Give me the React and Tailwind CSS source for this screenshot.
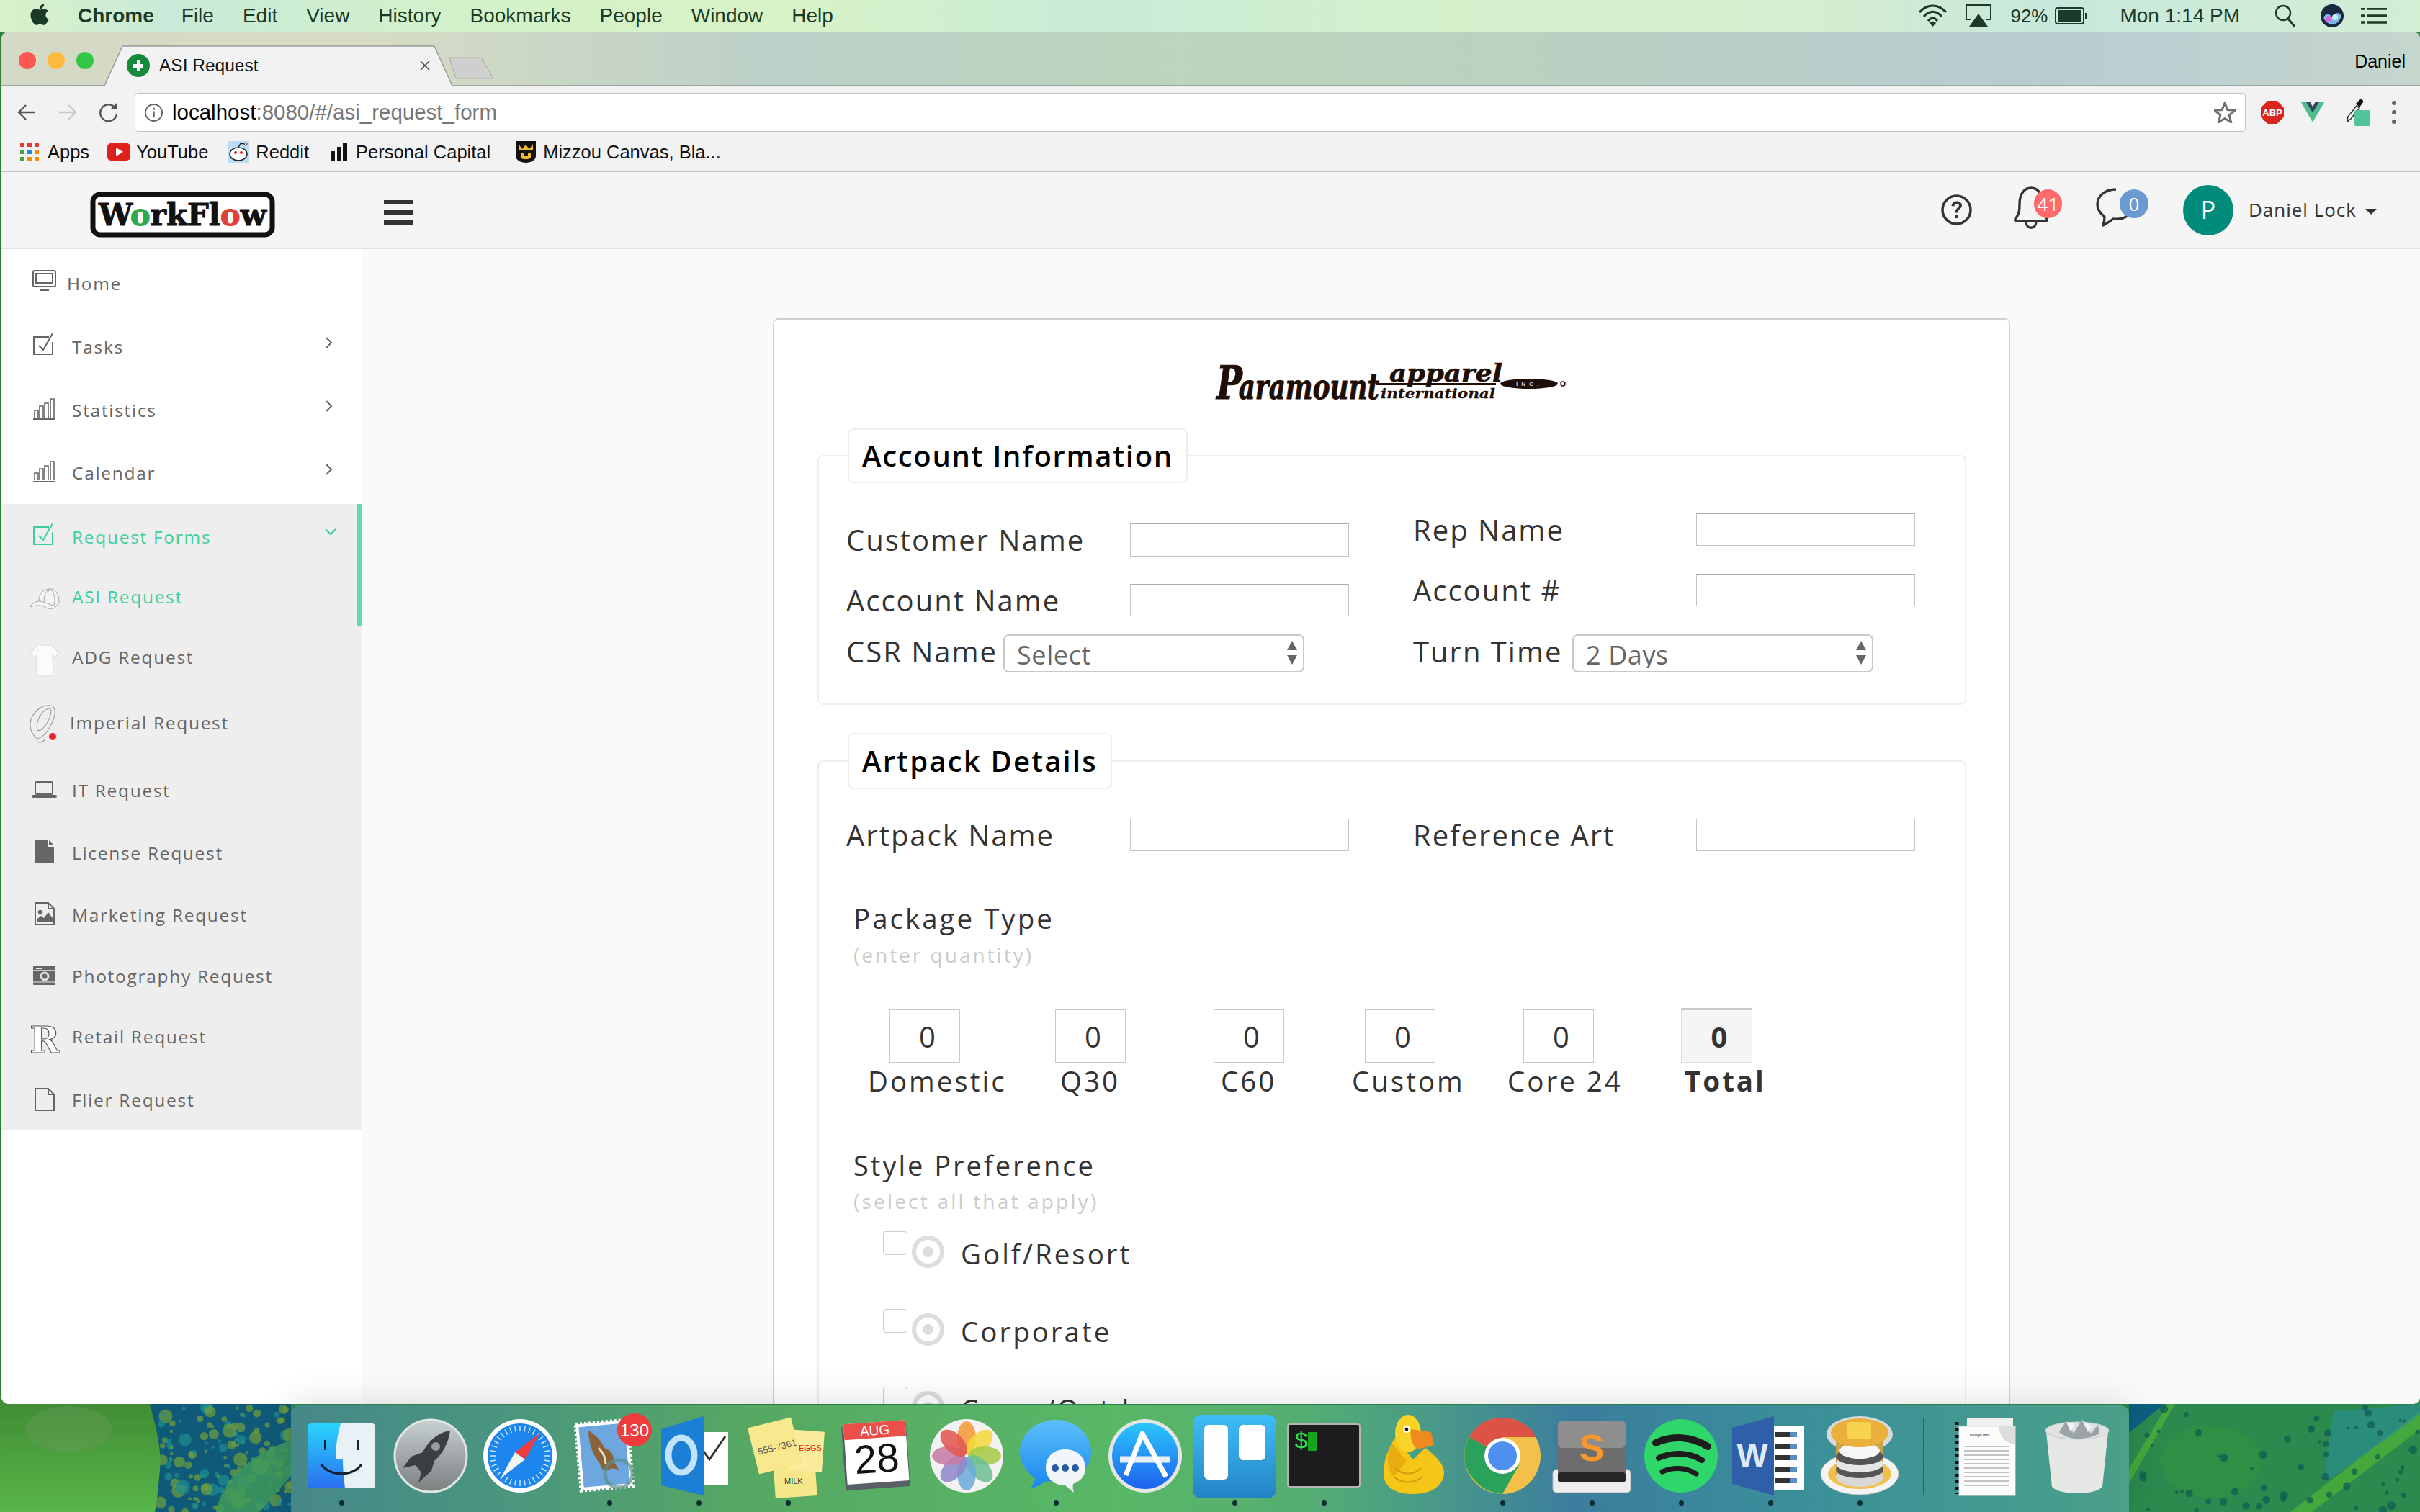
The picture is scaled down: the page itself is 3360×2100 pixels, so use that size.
import { FaApple } from "react-icons/fa";

const sidebarItems = [
  { label: "Home", icon: "home", row: "h-[88px]", text: "ml-[5px]" },
  { label: "Tasks", icon: "tasks", row: "h-[88px]", text: "ml-[12px]", chevron: true },
  { label: "Statistics", icon: "bars", row: "h-[88px]", text: "ml-[12px]", chevron: true },
  { label: "Calendar", icon: "bars", row: "h-[86px]", text: "ml-[12px]", chevron: true },
];

const requestItems = [
  { label: "ADG Request", icon: "shirt", row: "h-[86px]", text: "ml-[12px]" },
  { label: "Imperial Request", icon: "imperial", row: "h-[96px]", text: "ml-[9px]" },
  { label: "IT Request", icon: "laptop", row: "h-[92px]", text: "ml-[12px]" },
  { label: "License Request", icon: "fileSolid", row: "h-[82px]", text: "ml-[12px]" },
  { label: "Marketing Request", icon: "fileImage", row: "h-[90px]", text: "ml-[12px]" },
  { label: "Photography Request", icon: "camera", row: "h-[80px]", text: "ml-[12px]" },
  { label: "Retail Request", icon: "retail", row: "h-[88px]", text: "ml-[12px]" },
  { label: "Flier Request", icon: "file", row: "h-[85px] pt-[3px]", text: "ml-[12px]" },
];

const packageCols = [
  { label: "Domestic", input: "ml-[30px]", text: "ml-0" },
  { label: "Q30", input: "ml-[40px]", text: "ml-[47px]" },
  { label: "C60", input: "ml-[40px]", text: "ml-[50px]" },
  { label: "Custom", input: "ml-[30px]", text: "ml-[12px]" },
  { label: "Core 24", input: "ml-[30px]", text: "ml-[8px]" },
];

const styleOptions = ["Golf/Resort", "Corporate", "Camo/Outdoor"];

function SideIcon({ name, color = "#666" }) {
  const line = { fill: "none", stroke: color, strokeWidth: 2 };
  return (
    <svg viewBox="0 0 48 48" className="w-[48px] h-[48px] shrink-0 overflow-visible">
      {name === "home" && (
        <g {...line}>
          <rect x="6" y="6" width="31" height="22" rx="2" />
          <rect x="10" y="10" width="23" height="13" />
          <path d="M15 33H28" />
        </g>
      )}
      {name === "tasks" && (
        <g {...line}>
          <path d="M28 10H7V34H33V17" />
          <path d="M14 22L20 28L33 5" />
        </g>
      )}
      {name === "bars" && (
        <g {...line} strokeWidth="1.6">
          <path d="M6 36H37" strokeWidth="2" />
          <path d="M8 34V24H13V34M15 34V18H20V34M22 34V14H27V34M30 34V8H35V34" />
        </g>
      )}
      {name === "cap" && (
        <g fill="#f4f4f4" stroke="#aaa" strokeWidth="1">
          <path d="M14 30C14 16 24 13 30 13C38 13 42 20 42 32C40 36 36 38 33 37L14 30Z" />
          <path d="M14 30C8 31 3 34 2 38C10 35 18 35 24 39C30 42 36 40 38 37C30 36 22 30 14 30Z" />
          <path d="M28 13C22 18 20 26 22 32M30 13C36 18 37 28 35 36" fill="none" />
          <circle cx="27" cy="15" r="1" fill="#777" />
        </g>
      )}
      {name === "shirt" && (
        <g fill="#fbfbfb" stroke="#dddddd" strokeWidth="1.2">
          <path d="M13 6C18 8 26 8 31 6L42 18L37 24L33 21L34 48C26 51 18 51 10 48L11 21L7 24L2 18Z" />
        </g>
      )}
      {name === "imperial" && (
        <g fill="none" stroke="#999" strokeWidth="1.1">
          <path d="M30 0C18 -2 4 10 2 24C1 34 6 42 12 46C24 44 38 18 36 6C35 2 33 0 30 0Z" />
          <path d="M27 4C17 8 9 22 12 34C18 38 30 20 31 8C31 5 29 4 27 4Z" />
          <path d="M12 46C9 52 16 53 23 47" />
          <circle cx="33" cy="43" r="5" fill="#ee2030" stroke="none" />
        </g>
      )}
      {name === "laptop" && (
        <g>
          <rect x="9" y="12" width="24" height="17" rx="2" {...line} />
          <rect x="4" y="30" width="35" height="4" rx="2" fill={color} />
        </g>
      )}
      {name === "fileSolid" && (
        <g fill={color}>
          <path d="M9 5H26V15H35V37C35 38 34 38 33 38H10C9 38 8 38 8 37V6C8 5 8 5 9 5Z" />
          <path d="M28 6L35 13H28Z" />
        </g>
      )}
      {name === "fileImage" && (
        <g>
          <path d="M9 7H27L35 15V37H9Z" {...line} />
          <path d="M27 7V15H35" {...line} />
          <circle cx="16" cy="20" r="3.2" fill={color} />
          <path d="M12 34V29L17 25L21 28L27 20L33 28V34Z" fill={color} />
        </g>
      )}
      {name === "camera" && (
        <g>
          <path d="M8 9H36C37 9 37 10 37 11V35C37 36 36 36 35 36H8C7 36 6 36 6 35V11C6 10 7 9 8 9Z" fill={color} />
          <rect x="10" y="12" width="8" height="2" fill="#eee" />
          <path d="M6 16H37" stroke="#eee" strokeWidth="1.5" />
          <path d="M6 32H37" stroke="#eee" strokeWidth="1" />
          <circle cx="22" cy="24" r="6" fill="#ddd" stroke="#eee" />
          <circle cx="22" cy="24" r="3.5" fill={color} />
        </g>
      )}
      {name === "retail" && (
        <text x="22" y="46" textAnchor="middle" fontFamily="'DejaVu Serif', serif" fontWeight="700" fontSize="50" fill="#fff" stroke="#555" strokeWidth="1.2">
          R
        </text>
      )}
      {name === "file" && (
        <g {...line}>
          <path d="M9 8H27L35 16V38H9Z" />
          <path d="M27 8V16H35" />
        </g>
      )}
    </svg>
  );
}

function Chevron({ open }) {
  return open ? (
    <svg viewBox="0 0 16 10" className="absolute left-[449px] top-[34px] w-[16px] h-[10px]">
      <path d="M1 1L8 8L15 1" fill="none" stroke="#3ecf9c" strokeWidth="2" />
    </svg>
  ) : (
    <svg viewBox="0 0 10 16" className="absolute left-[450px] top-[30px] w-[10px] h-[16px]">
      <path d="M1 1L8 8L1 15" fill="none" stroke="#666" strokeWidth="2" />
    </svg>
  );
}

function SideRow({ item }) {
  return (
    <div className={`relative flex items-center pl-[38px] ${item.row}`}>
      <SideIcon name={item.icon} />
      <span className={`text-[24.5px] tracking-[1.7px] text-[#666] ${item.text}`}>{item.label}</span>
      {item.chevron && <Chevron />}
    </div>
  );
}

function Sidebar() {
  return (
    <aside className="w-[500px] shrink-0 bg-white pt-[4px] h-full">
      {sidebarItems.map((item) => (
        <SideRow key={item.label} item={item} />
      ))}
      <div className="bg-[#eeeeee]">
        <div className="border-r-[6px] border-[#63d9b0]">
          <div className="relative flex items-center pl-[38px] h-[90px] pt-[2px]">
            <SideIcon name="tasks" color="#3ecf9c" />
            <span className="ml-[12px] text-[24.5px] tracking-[1.7px] text-[#3ecf9c]">Request Forms</span>
            <Chevron open />
          </div>
          <div className="flex items-center pl-[38px] h-[80px] pb-[2px]">
            <SideIcon name="cap" />
            <span className="ml-[12px] text-[24.5px] tracking-[1.7px] text-[#3ecf9c]">ASI Request</span>
          </div>
        </div>
        {requestItems.map((item) => (
          <SideRow key={item.label} item={item} />
        ))}
      </div>
    </aside>
  );
}

function Field({ label, labelWidth = "w-[394px]", top, height = "h-[46px]" }) {
  return (
    <div className={`flex items-center ${top} ${height}`}>
      <span className={`shrink-0 whitespace-nowrap text-[#333] text-[40px] tracking-[2px] ${labelWidth}`}>{label}</span>
      <input className="w-[304px] h-full bg-white border border-[#c4c4c4] border-t-[#aaa] outline-none" />
    </div>
  );
}

function SelectField({ label, labelWidth, value, top }) {
  return (
    <div className={`flex items-center h-[53px] ${top}`}>
      <span className={`shrink-0 whitespace-nowrap pb-[6px] text-[#333] text-[40px] tracking-[2px] ${labelWidth}`}>{label}</span>
      <div className="relative w-[418px] h-full">
        <select
          defaultValue={value}
          className="appearance-none w-full h-full pl-[17px] pb-[4px] bg-white border-2 border-[#c8c8c8] rounded-[8px] text-[36px] tracking-[0.6px] text-[#666] outline-none"
        >
          <option>{value}</option>
        </select>
        <svg viewBox="0 0 18 34" className="absolute right-[8px] top-[9px] w-[18px] h-[34px]">
          <path d="M9 0L16 13H2Z M2 20H16L9 33Z" fill="#666" />
        </svg>
      </div>
    </div>
  );
}

function SectionLegend({ children, height, tracking }) {
  return (
    <legend className={`ml-[40px] px-[18px] bg-white border-2 border-[#eeeeee] rounded-[8px] text-black font-semibold text-[40px] ${tracking} ${height}`}>
      {children}
    </legend>
  );
}

function ParamountLogo() {
  const serif = "'DejaVu Serif', serif";
  return (
    <svg viewBox="0 -20 500 100" className="block ml-[545px] -mt-[20px] -mb-[20px] w-[500px] h-[100px]" fill="#1f0d08" stroke="#1f0d08">
      <text x="9" y="54" fontFamily={serif} fontStyle="italic" fontWeight="700" fontSize="48" strokeWidth="1" textLength="226" lengthAdjust="spacingAndGlyphs">
        <tspan fontSize="64">P</tspan>
        <tspan dx="-7">aramount</tspan>
      </text>
      <text x="249" y="30" fontFamily={serif} fontStyle="italic" fontWeight="700" fontSize="33" strokeWidth="0.6" textLength="157" lengthAdjust="spacingAndGlyphs">apparel</text>
      <rect x="231" y="32" width="166" height="3" stroke="none" />
      <text x="237" y="53" fontFamily={serif} fontStyle="italic" fontWeight="700" fontSize="19" strokeWidth="0.3" textLength="159" lengthAdjust="spacingAndGlyphs">international</text>
      <ellipse cx="443" cy="33" rx="40" ry="7" stroke="none" />
      <text x="443" y="36" textAnchor="middle" fontFamily="'Liberation Sans', sans-serif" fontSize="8" letterSpacing="5" fill="#fff" stroke="none">INC.</text>
      <circle cx="490" cy="33" r="3" fill="none" strokeWidth="1.5" />
    </svg>
  );
}

function RequestForm() {
  return (
    <div className="ml-[571px] mt-[96px] w-[1718px] bg-white border border-[#cfcfcf] border-t-2 rounded-[8px] pt-[56px] pl-[61px]">
      <ParamountLogo />
      <fieldset className="mt-[35px] w-[1595px] border-2 border-[#eeeeee] rounded-[8px]">
        <SectionLegend height="leading-[72px]" tracking="tracking-[1.7px]">Account Information</SectionLegend>
        <div className="flex pb-[43px]">
          <div className="w-[825px] pl-[38px]">
            <Field label="Customer Name" top="mt-[56px]" />
            <Field label="Account Name" top="mt-[38px]" height="h-[45px]" />
            <SelectField label="CSR Name" labelWidth="w-[218px]" value="Select" top="mt-[25px]" />
          </div>
          <div>
            <Field label="Rep Name" labelWidth="w-[393px]" top="mt-[42px]" height="h-[45px]" />
            <Field label="Account #" labelWidth="w-[393px]" top="mt-[39px]" height="h-[45px]" />
            <SelectField label="Turn Time" labelWidth="w-[221px]" value="2 Days" top="mt-[39px]" />
          </div>
        </div>
      </fieldset>

      <fieldset className="mt-[39px] w-[1595px] border-2 border-[#eeeeee] rounded-[8px] pb-[200px]">
        <SectionLegend height="leading-[74px]" tracking="tracking-[2.2px]">Artpack Details</SectionLegend>
        <div className="flex pt-[41px]">
          <div className="w-[825px] pl-[38px]">
            <Field label="Artpack Name" height="h-[45px]" />
          </div>
          <Field label="Reference Art" labelWidth="w-[393px]" height="h-[45px]" />
        </div>

        <div className="pl-[48px]">
          <div className="mt-[68px] h-[50px] leading-[50px] text-[38.5px] tracking-[3px] text-[#333]">Package Type</div>
          <div className="mt-[8px] h-[36px] leading-[36px] text-[28px] tracking-[3px] text-[#cccccc]">(enter quantity)</div>

          <div className="mt-[58px] ml-[20px] flex">
            {packageCols.map((col) => (
              <div key={col.label} className="w-[220px]">
                <input
                  defaultValue="0"
                  className={`block w-[98px] h-[74px] pl-[7px] bg-white border border-[#c8c8c8] text-center text-[40px] text-[#333] outline-none ${col.input}`}
                />
                <div className={`h-[50px] leading-[50px] text-[38.5px] tracking-[3px] text-[#333] ${col.text}`}>{col.label}</div>
              </div>
            ))}
            <div className="w-[220px]">
              <input
                defaultValue="0"
                className="block ml-[29px] w-[99px] h-[76px] pl-[7px] -mt-[2px] bg-[#f5f5f5] border border-[#dddddd] border-t-[3px] border-t-[#c8c8c8] text-center text-[40px] font-bold text-[#333] outline-none"
              />
              <div className="ml-[34px] h-[50px] leading-[50px] text-[38.5px] font-bold tracking-[3px] text-[#333]">Total</div>
            </div>
          </div>

          <div className="mt-[67px] h-[50px] leading-[50px] text-[38px] tracking-[3px] text-[#333]">Style Preference</div>
          <div className="mt-[7px] h-[36px] leading-[36px] text-[28px] tracking-[3.2px] text-[#cccccc]">(select all that apply)</div>

          <div className="mt-[24px] pl-[41px]">
            {styleOptions.map((option) => (
              <div key={option} className="flex items-start h-[108px]">
                <input type="checkbox" className="appearance-none w-[34px] h-[33px] bg-white border border-[#cccccc] rounded-[4px]" />
                <div className="ml-[6px] mt-[6px] w-[45px] h-[45px] rounded-full border-[6px] border-[#dddddd] flex items-center justify-center">
                  <div className="w-[15px] h-[15px] rounded-full bg-[#dddddd]" />
                </div>
                <span className="ml-[23px] mt-[6px] leading-[50px] text-[38.5px] tracking-[3px] text-[#333]">{option}</span>
              </div>
            ))}
          </div>
        </div>
      </fieldset>
    </div>
  );
}

function WorkFlowLogo() {
  return (
    <svg viewBox="0 0 257 64" className="ml-[123px] mt-[13px] w-[257px] h-[64px] shrink-0 overflow-visible">
      <rect x="4" y="4" width="249" height="56" rx="10" fill="#fff" stroke="#111" strokeWidth="7" />
      <text x="12" y="47" fontFamily="'DejaVu Serif', serif" fontWeight="700" fontSize="42" textLength="233" lengthAdjust="spacingAndGlyphs" fill="#111" stroke="#111" strokeWidth="1">
        W<tspan fill="#2fa84f" stroke="#2fa84f">o</tspan>rkFl<tspan fill="#e0403a" stroke="#e0403a">o</tspan>w
      </text>
    </svg>
  );
}

function NavBar() {
  return (
    <header className="flex items-center h-[107px] bg-[#f5f5f5] border-b-2 border-[#e2e2e2] shrink-0">
      <WorkFlowLogo />
      <div className="ml-[151px] mt-[7px] w-[41px] flex flex-col gap-[8px]">
        <span className="block h-[6px] bg-[#333]" />
        <span className="block h-[6px] bg-[#333]" />
        <span className="block h-[6px] bg-[#333]" />
      </div>
      <svg viewBox="0 0 43 43" className="ml-auto w-[43px] h-[43px]">
        <circle cx="21.5" cy="21.5" r="19.5" fill="none" stroke="#333" strokeWidth="3.5" />
        <path d="M14.5 16C15 11 19 9.5 22 9.5C26 9.5 29 12 29 15.5C29 20 23.5 20.5 23 25.5H19.5C19.5 19 25 18.5 25 15.5C25 14 23.5 13 22 13C20 13 18.5 14 18.5 16.5Z" fill="#333" />
        <rect x="19" y="28" width="5" height="5" fill="#333" />
      </svg>
      <div className="relative ml-[56px] w-[51px] h-[60px] -mt-[6px]">
        <svg viewBox="0 0 51 60" className="w-[51px] h-[60px]">
          <path d="M4 45C9 40 10 34 10 24C10 10 17 2 26 2C35 2 42 10 42 24C42 34 43 40 48 45C49 47 48 48 46 48H6C4 48 3 47 4 45Z" fill="none" stroke="#333" strokeWidth="3.4" />
          <path d="M19 49C19 60 33 60 33 49" fill="none" stroke="#333" strokeWidth="3.4" />
        </svg>
        <span className="absolute left-[30px] top-[4px] w-[39px] h-[40px] rounded-full bg-[#ff6b6b] text-white text-[26px] leading-[40px] text-center">41</span>
      </div>
      <div className="relative ml-[65px] w-[54px] h-[54px] -mt-[8px]">
        <svg viewBox="0 0 54 54" className="w-[54px] h-[54px]">
          <path d="M28 2C13 2 2 11 2 23C2 31 7 36 12 40C12 45 11 49 10 52C16 49 20 46 24 43C40 45 52 36 52 23" fill="none" stroke="#333" strokeWidth="3.4" strokeLinejoin="round" />
        </svg>
        <span className="absolute left-[33px] top-[2px] w-[40px] h-[40px] rounded-full bg-[#6a9ad0] text-white text-[26px] leading-[40px] text-center">0</span>
      </div>
      <div className="ml-[67px] w-[70px] h-[70px] rounded-full bg-[#008b7a] text-white text-[34px] flex items-center justify-center">P</div>
      <span className="ml-[21px] text-[26px] tracking-[1px] text-[#333]">Daniel Lock</span>
      <svg viewBox="0 0 16 8" className="ml-[12px] mr-[60px] w-[16px] h-[8px] mt-[4px]">
        <path d="M0 0H16L8 8Z" fill="#333" />
      </svg>
    </header>
  );
}

function TabStrip() {
  return (
    <div className="flex h-[75px] shrink-0 border-b border-[#9aa5a0] bg-[linear-gradient(90deg,#d4d9c6_0%,#d6dcc4_15%,#bcd0c8_32%,#bdd4bc_50%,#bad0c2_65%,#b9ccd2_85%,#c5d6cd_100%)]">
      <div className="flex gap-[16px] pl-[24px] pt-[28px]">
        <span className="block w-[24px] h-[24px] rounded-full bg-[#fc5753]" />
        <span className="block w-[24px] h-[24px] rounded-full bg-[#fdbc40]" />
        <span className="block w-[24px] h-[24px] rounded-full bg-[#33c748]" />
      </div>
      <div className="relative ml-[15px] mt-[19px] w-[483px] h-[56px] shrink-0">
        <svg viewBox="0 0 483 56" className="absolute inset-0 w-[483px] h-[56px]">
          <path d="M0 56L25 1H458L483 56" fill="#f2f2f2" stroke="#9a9a9a" strokeWidth="1.5" />
        </svg>
        <div className="relative flex items-center h-full pl-[31px]">
          <span className="relative w-[32px] h-[32px] rounded-full bg-[#138a3c] flex items-center justify-center">
            <span className="absolute w-[14px] h-[5px] bg-white" />
            <span className="absolute w-[5px] h-[14px] bg-white" />
          </span>
          <span className="ml-[13px] w-[250px] whitespace-nowrap font-['Liberation_Sans',sans-serif] text-[24.5px] text-[#111]">ASI Request</span>
          <svg viewBox="0 0 14 14" className="ml-[112px] w-[14px] h-[14px]">
            <path d="M1 1L13 13M13 1L1 13" stroke="#444" strokeWidth="1.6" />
          </svg>
        </div>
      </div>
      <svg viewBox="0 0 63 31" className="-ml-[5px] mt-[35px] w-[63px] h-[31px] shrink-0">
        <path d="M1 1H43C45 1 46 2 47 4L62 30H13C11 30 10 29 9 27Z" fill="#cfcfcf" stroke="#a5a5a5" />
      </svg>
      <span className="ml-auto mr-[20px] mt-[26px] font-['Liberation_Sans',sans-serif] text-[25px] leading-[30px] text-black">Daniel</span>
    </div>
  );
}

function Toolbar() {
  return (
    <div className="flex items-center h-[64px] pt-[10px] bg-[#f2f2f2] shrink-0 font-['Liberation_Sans',sans-serif]">
      <svg viewBox="0 0 26 26" className="ml-[22px] w-[26px] h-[26px]">
        <path d="M25 13H3M12 3L2 13L12 23" fill="none" stroke="#555" strokeWidth="2.4" />
      </svg>
      <svg viewBox="0 0 26 26" className="ml-[31px] w-[26px] h-[26px]">
        <path d="M1 13H23M14 3L24 13L14 23" fill="none" stroke="#c8c8c8" strokeWidth="2.4" />
      </svg>
      <svg viewBox="0 0 28 28" className="ml-[30px] w-[28px] h-[28px]">
        <path d="M23 8A11.5 11.5 0 1 0 25 17" fill="none" stroke="#555" strokeWidth="2.4" />
        <path d="M25 1V10H16Z" fill="#555" />
      </svg>
      <div className="flex items-center ml-[22px] w-[2931px] h-[54px] bg-white border border-[#c4c4c4] rounded-[5px]">
        <svg viewBox="0 0 28 28" className="ml-[12px] w-[27px] h-[27px]">
          <circle cx="14" cy="14" r="12" fill="none" stroke="#666" strokeWidth="2" />
          <rect x="12.7" y="12" width="2.6" height="9" fill="#666" />
          <rect x="12.7" y="7" width="2.6" height="3" fill="#666" />
        </svg>
        <span className="ml-[12px] text-[29.5px] text-[#777]">
          <span className="text-black">localhost</span>:8080/#/asi_request_form
        </span>
        <svg viewBox="0 0 30 30" className="ml-auto mr-[13px] w-[30px] h-[30px]">
          <path d="M15 2L18.8 11.5L29 12.3L21.2 18.8L23.6 28.7L15 23.4L6.4 28.7L8.8 18.8L1 12.3L11.2 11.5Z" fill="none" stroke="#6e6e6e" strokeWidth="3" />
        </svg>
      </div>
      <svg viewBox="0 0 32 32" className="ml-[21px] w-[32px] h-[32px]">
        <path d="M9.5 0H22.5L32 9.5V22.5L22.5 32H9.5L0 22.5V9.5Z" fill="#d8261b" />
        <text x="16" y="21" textAnchor="middle" fontFamily="'Liberation Sans', sans-serif" fontWeight="700" fontSize="13" fill="#fff">ABP</text>
      </svg>
      <svg viewBox="0 0 32 28" className="ml-[24px] w-[32px] h-[28px]">
        <path d="M0 0H7L16 15L25 0H32L16 28Z" fill="#4fc08d" />
        <path d="M7 0H12.5L16 6L19.5 0H25L16 15Z" fill="#35495e" />
      </svg>
      <div className="relative ml-[30px] w-[34px] h-[38px]">
        <svg viewBox="0 0 26 34" className="absolute left-0 top-0 w-[26px] h-[34px]">
          <path d="M2 32L3 25L15 10L19 13L7 28Z" fill="#fff" stroke="#333" strokeWidth="1.6" />
          <path d="M14 7L20 1C22 0 25 3 24 5L19 12Z" fill="#111" />
        </svg>
        <span className="absolute left-[12px] top-[16px] w-[22px] h-[22px] rounded-[2px] bg-[#52c496]" />
      </div>
      <div className="ml-[30px] flex flex-col gap-[7px]">
        <span className="block w-[6px] h-[6px] rounded-full bg-[#666]" />
        <span className="block w-[6px] h-[6px] rounded-full bg-[#666]" />
        <span className="block w-[6px] h-[6px] rounded-full bg-[#666]" />
      </div>
    </div>
  );
}

function BookmarksBar() {
  return (
    <div className="flex items-center h-[56px] pt-[2px] bg-[#f2f2f2] border-b-2 border-[#c4c4c4] shrink-0 text-[25.5px] text-[#111] font-['Liberation_Sans',sans-serif]">
      <svg viewBox="0 0 27 26" className="ml-[26px] w-[27px] h-[26px]">
        <rect x="0" y="0" width="6" height="6" fill="#e53935" />
        <rect x="10" y="0" width="6" height="6" fill="#e53935" />
        <rect x="20" y="0" width="6" height="6" fill="#e53935" />
        <rect x="0" y="10" width="6" height="6" fill="#43a047" />
        <rect x="10" y="10" width="6" height="6" fill="#1e88e5" />
        <rect x="20" y="10" width="6" height="6" fill="#fb8c00" />
        <rect x="0" y="20" width="6" height="6" fill="#43a047" />
        <rect x="10" y="20" width="6" height="6" fill="#fb8c00" />
        <rect x="20" y="20" width="6" height="6" fill="#fb8c00" />
      </svg>
      <span className="ml-[11px]">Apps</span>
      <svg viewBox="0 0 32 24" className="ml-[25px] w-[32px] h-[24px]">
        <rect width="32" height="24" rx="5" fill="#e0201c" />
        <path d="M12 6L22 12L12 18Z" fill="#fff" />
      </svg>
      <span className="ml-[8px]">YouTube</span>
      <svg viewBox="0 0 30 30" className="ml-[27px] w-[30px] h-[30px]">
        <rect width="30" height="30" fill="#bcdcf2" />
        <ellipse cx="15" cy="18" rx="12" ry="9" fill="#fff" stroke="#222" strokeWidth="1.5" />
        <circle cx="11" cy="16" r="2" fill="#e02020" />
        <circle cx="19" cy="16" r="2" fill="#e02020" />
        <path d="M15 9L18 3L24 4" fill="none" stroke="#222" strokeWidth="1.4" />
        <circle cx="25" cy="4" r="2" fill="#fff" stroke="#222" />
      </svg>
      <span className="ml-[9px]">Reddit</span>
      <svg viewBox="0 0 22 26" className="ml-[31px] w-[22px] h-[26px]">
        <rect x="0" y="12" width="5" height="14" fill="#111" />
        <rect x="8" y="6" width="5" height="20" fill="#111" />
        <rect x="16" y="0" width="6" height="26" fill="#111" />
      </svg>
      <span className="ml-[12px]">Personal Capital</span>
      <svg viewBox="0 0 30 32" className="ml-[34px] w-[30px] h-[32px]">
        <path d="M1 1H29V22C29 27 22 31 15 31C8 31 1 27 1 22Z" fill="#111" />
        <path d="M5 5L10 12L15 6L20 12L25 5V13H5Z M8 17H12V22H18V17H22V24C20 27 10 27 8 24Z" fill="#f1b82d" />
      </svg>
      <span className="ml-[9px]">Mizzou Canvas, Bla...</span>
    </div>
  );
}

function ChromeWindow() {
  return (
    <div className="ml-[2px] flex flex-col h-[1906px] rounded-[10px] overflow-hidden bg-[#fafafa]">
      <TabStrip />
      <Toolbar />
      <BookmarksBar />
      <NavBar />
      <div className="flex flex-1 min-h-0">
        <Sidebar />
        <main className="flex-1 min-w-0 overflow-hidden bg-[#fafafa]">
          <RequestForm />
        </main>
      </div>
    </div>
  );
}

function MenuBar() {
  const menus = ["File", "Edit", "View", "History", "Bookmarks", "People", "Window", "Help"];
  return (
    <div className="flex items-center h-[44px] shrink-0 text-[28px] text-[#1c3a28] font-['Liberation_Sans',sans-serif] bg-[linear-gradient(90deg,#d8f2c8_0%,#c9ead8_7%,#d4f2c8_20%,#d8f3c6_32%,#c9ecd8_45%,#d5f1cc_60%,#d6edcf_74%,#c8e8dc_85%,#d2eed3_100%)]">
      <FaApple className="ml-[38px] w-[34px] h-[34px] -mt-[4px]" />
      <span className="ml-[36px] font-bold">Chrome</span>
      <div className="flex gap-[40px] ml-[38px]">
        {menus.map((menu) => (
          <span key={menu}>{menu}</span>
        ))}
      </div>
      <svg viewBox="0 0 43 32" className="ml-auto w-[43px] h-[32px]">
        <path d="M3 11C14 -1 29 -1 40 11M9 17C17 8 26 8 34 17M15 23C19 18 24 18 28 23" fill="none" stroke="#1c3a28" strokeWidth="3" />
        <path d="M21.5 31L17 26C20 23 23 23 26 26Z" fill="#1c3a28" />
      </svg>
      <svg viewBox="0 0 36 32" className="ml-[24px] w-[36px] h-[32px]">
        <path d="M8 21H1V1H35V21H28" fill="none" stroke="#1c3a28" strokeWidth="2" />
        <path d="M18 13L31 31H5Z" fill="#1c3a28" />
      </svg>
      <span className="ml-[26px] text-[26px]">92%</span>
      <svg viewBox="0 0 45 24" className="ml-[10px] w-[45px] h-[24px]">
        <rect x="1" y="1" width="39" height="22" rx="3" fill="none" stroke="#1c3a28" strokeWidth="2" />
        <rect x="4" y="4" width="33" height="16" fill="#1c3a28" />
        <rect x="42" y="8" width="3" height="8" fill="#1c3a28" />
      </svg>
      <span className="ml-[45px]">Mon 1:14 PM</span>
      <svg viewBox="0 0 30 32" className="ml-[48px] w-[30px] h-[32px]">
        <circle cx="12" cy="12" r="10" fill="none" stroke="#1c3a28" strokeWidth="2.4" />
        <path d="M19 20L28 31" stroke="#1c3a28" strokeWidth="3" />
      </svg>
      <svg viewBox="0 0 32 32" className="ml-[34px] w-[32px] h-[32px]">
        <circle cx="16" cy="16" r="16" fill="#1a2740" />
        <path d="M4 18C9 10 13 14 16 18C20 12 25 9 29 16C26 25 22 27 16 28C10 27 6 24 4 18Z" fill="#7fb7e8" />
        <circle cx="11" cy="20" r="4" fill="#d56ad8" />
        <circle cx="20" cy="18" r="4" fill="#c8f0f2" />
      </svg>
      <svg viewBox="0 0 36 22" className="ml-[24px] mr-[46px] w-[36px] h-[22px]">
        <path d="M0 1H5M0 11H5M0 20H5M9 1H36M9 11H36M9 20H36" stroke="#1c3a28" strokeWidth="3.4" />
      </svg>
    </div>
  );
}

// fixed scatter, same picture on every load
const scatter = (i, seed) => {
  const v = Math.sin(i * 12.9898 + seed * 78.233) * 43758.5453;
  return v - Math.floor(v);
};

const spots = Array.from({ length: 150 }, (_, i) => ({
  x: 222 + scatter(i, 1) * 182,
  y: 1952 + scatter(i, 2) * 148,
  r: 2 + scatter(i, 3) * scatter(i, 4) * 10,
  fill: i % 3 === 0 ? "#1f8d8f" : "#6f9f3a",
}));

const darkSpots = Array.from({ length: 60 }, (_, i) => ({
  x: 2960 + scatter(i, 5) * 400,
  y: 1952 + scatter(i, 6) * 148,
  r: 2 + scatter(i, 7) * 4,
}));

// only the strip around the dock is ever visible
function Wallpaper() {
  return (
    <svg viewBox="0 0 3360 2100" className="absolute inset-0 w-[3360px] h-[2100px]">
      <defs>
        <linearGradient id="wallLeft" x1="0" y1="0" x2="0" y2="1">
          <stop offset="0" stopColor="#3f8a33" />
          <stop offset="1" stopColor="#58b548" />
        </linearGradient>
      </defs>
      <rect width="3360" height="2100" fill="#2b8a4e" />
      <rect x="0" y="0" width="3" height="1950" fill="#2f7d35" />
      <rect x="0" y="1940" width="404" height="160" fill="#0f5a78" />
      {spots.map((s, i) => (
        <circle key={i} cx={s.x} cy={s.y} r={s.r} fill={s.fill} opacity="0.7" />
      ))}
      <path d="M0 1940H205C215 1975 225 2010 222 2040C220 2065 218 2085 215 2100H0Z" fill="url(#wallLeft)" />
      <ellipse cx="95" cy="1985" rx="60" ry="32" fill="#6d9a5e" opacity="0.35" />
      <path d="M300 2100C310 2050 350 2020 404 2000V2050L360 2100Z" fill="#3f9a5c" opacity="0.85" />
      <path d="M2956 1950H3005L2956 1990Z" fill="#0d5f80" />
      <path d="M2956 2040L3010 1950H3020L2956 2060Z" fill="#45a83d" />
      <path d="M3180 2100L3360 1960V1985L3210 2100Z" fill="#45a83d" />
      <path d="M3240 1960L3360 1950V1965L3255 2040L3225 2060Z" fill="#2a8f9a" opacity="0.6" />
      <ellipse cx="3070" cy="2030" rx="70" ry="50" fill="#2f9044" opacity="0.8" />
      {darkSpots.map((s, i) => (
        <circle key={i} cx={s.x} cy={s.y} r={s.r} fill="#0e5a50" opacity="0.7" />
      ))}
    </svg>
  );
}

function FinderIcon() {
  return (
    <>
      <defs>
        <linearGradient id="finderBlue" x1="0" y1="0" x2="0" y2="1">
          <stop offset="0" stopColor="#2ad4fc" />
          <stop offset="1" stopColor="#2a6ff0" />
        </linearGradient>
      </defs>
      <rect x="8" y="10" width="94" height="90" rx="5" fill="url(#finderBlue)" />
      <path d="M54 10H97C100 10 102 12 102 15V95C102 98 100 100 97 100H60C58 85 57 72 57 60H47C47 40 50 25 54 10Z" fill="#e9f0f6" />
      <rect x="31" y="33" width="3" height="14" fill="#123" />
      <rect x="77" y="33" width="3" height="14" fill="#123" />
      <path d="M27 67C40 84 70 84 83 67" fill="none" stroke="#123" strokeWidth="3" />
    </>
  );
}

function LaunchpadIcon() {
  return (
    <>
      <defs>
        <linearGradient id="padGrey" x1="0" y1="0" x2="0" y2="1">
          <stop offset="0" stopColor="#c8d0d2" />
          <stop offset="1" stopColor="#7b7f80" />
        </linearGradient>
      </defs>
      <circle cx="55" cy="55" r="50" fill="url(#padGrey)" stroke="#dfe6e4" strokeWidth="3" />
      <path d="M82 20C66 22 52 34 44 50L28 56L16 72L34 68L42 78L38 92L56 76L60 62C72 52 80 36 82 20Z" fill="#3c3f42" />
      <circle cx="62" cy="42" r="6" fill="#9a9d9f" />
    </>
  );
}

function SafariIcon() {
  const ticks = Array.from({ length: 36 }, (_, i) => i * 10);
  return (
    <>
      <circle cx="55" cy="55" r="51" fill="#fff" />
      <circle cx="55" cy="55" r="45" fill="#1c86ee" />
      {ticks.map((deg) => (
        <path key={deg} d="M55 13V21" stroke="#cfe6ff" strokeWidth="1.5" transform={`rotate(${deg} 55 55)`} />
      ))}
      <path d="M82 24L62 60L48 50Z" fill="#ee3b3b" />
      <path d="M28 86L48 50L62 60Z" fill="#f4f4f4" />
    </>
  );
}

function MailIcon() {
  return (
    <>
      <g transform="rotate(-5 50 55)">
        <rect x="12" y="8" width="72" height="92" fill="#fff" stroke="#fff" strokeWidth="5" strokeDasharray="3 3" />
        <rect x="16" y="12" width="64" height="84" fill="#6ea6e0" />
      </g>
      <path d="M26 20C36 26 44 34 48 44C56 46 62 54 62 64L68 74L58 72C52 78 44 76 42 66C32 54 26 36 26 20Z" fill="#8a6238" />
      <path d="M40 44C46 50 50 58 50 66" fill="none" stroke="#e9dcc4" strokeWidth="3" />
      <circle cx="68" cy="80" r="19" fill="none" stroke="#5c8f88" strokeWidth="5" opacity="0.7" />
      <ellipse cx="90" cy="19" rx="24" ry="23" fill="#ee3c3c" />
      <text x="90" y="28" textAnchor="middle" fontFamily="'Liberation Sans', sans-serif" fontSize="24" fill="#fff">130</text>
    </>
  );
}

function OutlookIcon() {
  return (
    <>
      <rect x="50" y="22" width="46" height="74" fill="#fff" />
      <path d="M60 46L70 60L92 28" fill="none" stroke="#333" strokeWidth="3" />
      <path d="M3 18L62 0V110L3 96Z" fill="#1b7fd6" />
      <ellipse cx="31" cy="54" rx="18" ry="24" fill="none" stroke="#bfe4fb" strokeWidth="9" />
    </>
  );
}

function StickiesIcon() {
  return (
    <>
      <rect x="36" y="62" width="58" height="50" fill="#f6e88a" transform="rotate(-4 66 87)" />
      <rect x="58" y="20" width="46" height="56" fill="#fbec9b" transform="rotate(4 80 48)" />
      <rect x="6" y="8" width="62" height="66" fill="#f8e98e" transform="rotate(-14 37 41)" />
      <text x="12" y="48" fontFamily="'Liberation Sans', sans-serif" fontSize="13" fill="#555" transform="rotate(-14 37 41)">555-7361</text>
      <text x="70" y="48" fontFamily="'Liberation Sans', sans-serif" fontSize="11" fill="#e02020">EGGS</text>
      <text x="50" y="94" fontFamily="'Liberation Sans', sans-serif" fontSize="11" fill="#334">MILK</text>
    </>
  );
}

function CalendarIcon() {
  return (
    <g transform="rotate(-4 55 55)">
      <rect x="8" y="12" width="90" height="88" fill="#5a5f66" />
      <rect x="11" y="8" width="86" height="84" fill="#fff" />
      <rect x="11" y="8" width="86" height="22" fill="#ea4f4a" />
      <text x="54" y="26" textAnchor="middle" fontFamily="'Liberation Sans', sans-serif" fontSize="19" fill="#fff">AUG</text>
      <text x="54" y="78" textAnchor="middle" fontFamily="'Liberation Sans', sans-serif" fontSize="56" fill="#111">28</text>
    </g>
  );
}

function PhotosIcon() {
  const petals = [
    { deg: 0, c: "#f29a3a" },
    { deg: 45, c: "#f4d93e" },
    { deg: 90, c: "#a5c94a" },
    { deg: 135, c: "#6fbf92" },
    { deg: 180, c: "#6cacd8" },
    { deg: 225, c: "#8f88c8" },
    { deg: 270, c: "#c77aa8" },
    { deg: 315, c: "#e25850" },
  ];
  return (
    <>
      <circle cx="55" cy="55" r="51" fill="#f2f2f2" />
      {petals.map((p) => (
        <ellipse key={p.deg} cx="55" cy="30" rx="13" ry="23" fill={p.c} opacity="0.88" transform={`rotate(${p.deg} 55 55)`} />
      ))}
    </>
  );
}

function MessagesIcon() {
  return (
    <>
      <defs>
        <linearGradient id="msgBlue" x1="0" y1="0" x2="0" y2="1">
          <stop offset="0" stopColor="#5cc0fb" />
          <stop offset="1" stopColor="#1a86ee" />
        </linearGradient>
      </defs>
      <path d="M55 5C28 5 5 24 5 50C5 66 15 78 26 86C25 92 23 96 20 100C30 98 36 93 42 90C70 94 104 80 104 50C104 24 82 5 55 5Z" fill="url(#msgBlue)" />
      <path d="M68 46C50 46 41 58 41 72C41 86 52 96 68 96L80 106C79 102 78 99 79 94C90 90 96 82 96 72C96 58 86 46 68 46Z" fill="#f2f6fb" />
      <circle cx="54" cy="72" r="5" fill="#2a5aa0" />
      <circle cx="68" cy="72" r="5" fill="#2a5aa0" />
      <circle cx="82" cy="72" r="5" fill="#2a5aa0" />
    </>
  );
}

function AppStoreIcon() {
  return (
    <>
      <defs>
        <linearGradient id="storeBlue" x1="0" y1="0" x2="0" y2="1">
          <stop offset="0" stopColor="#2cc6fb" />
          <stop offset="1" stopColor="#1d62ee" />
        </linearGradient>
      </defs>
      <circle cx="55" cy="55" r="51" fill="#e6e6e6" />
      <circle cx="55" cy="55" r="46" fill="url(#storeBlue)" />
      <path d="M20 60H90" stroke="#e8eef6" strokeWidth="9" />
      <path d="M52 22L28 82M50 22L84 84" stroke="#fff" strokeWidth="7" fill="none" />
    </>
  );
}

function TrelloIcon() {
  return (
    <>
      <defs>
        <linearGradient id="trelloBlue" x1="0" y1="0" x2="0" y2="1">
          <stop offset="0" stopColor="#3fbdf7" />
          <stop offset="1" stopColor="#2383c4" />
        </linearGradient>
      </defs>
      <rect x="-3" y="-2" width="116" height="116" rx="12" fill="url(#trelloBlue)" />
      <rect x="13" y="12" width="33" height="76" rx="6" fill="#fff" />
      <rect x="61" y="12" width="37" height="49" rx="6" fill="#fff" />
    </>
  );
}

function TerminalIcon() {
  return (
    <>
      <rect x="5" y="11" width="100" height="87" rx="3" fill="#1c1c1c" stroke="#b5b5b5" strokeWidth="2" />
      <text x="14" y="44" fontFamily="'Liberation Mono', monospace" fontSize="32" fill="#2ee04a">$</text>
      <rect x="33" y="22" width="13" height="26" fill="#16a320" />
    </>
  );
}

function DuckIcon() {
  return (
    <>
      <path d="M30 30C20 45 13 65 14 82C15 98 30 108 55 108C82 108 98 95 98 78C98 66 85 54 72 44L55 60Z" fill="#f5c518" />
      <path d="M26 38C17 52 18 72 28 84L46 62Z" fill="#e8ae10" />
      <ellipse cx="48" cy="24" rx="18" ry="26" fill="#f9d327" />
      <path d="M52 18L80 22L84 40L62 46C54 42 50 30 52 18Z" fill="#ee8a20" />
      <circle cx="46" cy="18" r="5" fill="#fff" />
      <circle cx="46" cy="18" r="2.4" fill="#111" />
      <path d="M30 72C40 82 56 82 66 72M28 84C40 94 56 94 68 84" fill="none" stroke="#d69a0c" strokeWidth="2" />
    </>
  );
}

function ChromeIcon() {
  return (
    <>
      <circle cx="55" cy="55" r="53" fill="#f5c04a" />
      <path d="M55 55L9 29C18 12 36 2 55 2C75 2 93 13 102 29H55Z" fill="#dc5246" />
      <path d="M55 55L9 29C-1 47 0 68 12 84C22 98 38 107 55 108L78 68Z" fill="#2ba25c" />
      <circle cx="55" cy="55" r="25" fill="#fff" />
      <circle cx="55" cy="55" r="20" fill="#4f8ff0" />
    </>
  );
}

function SublimeIcon() {
  return (
    <>
      <rect x="1" y="74" width="108" height="32" rx="5" fill="#eeeeee" stroke="#bbb" />
      <rect x="8" y="6" width="94" height="84" rx="6" fill="#6d6d6d" />
      <rect x="8" y="6" width="94" height="38" rx="6" fill="#8e8e8e" />
      <rect x="8" y="78" width="94" height="14" rx="4" fill="#262626" />
      <text x="55" y="62" textAnchor="middle" fontFamily="'Liberation Sans', sans-serif" fontWeight="700" fontSize="52" fill="#f7962a">S</text>
    </>
  );
}

function SpotifyIcon() {
  return (
    <>
      <circle cx="55" cy="55" r="51" fill="#2fd66a" />
      <path d="M20 37C42 26 70 28 92 42" fill="none" stroke="#1d1d1d" strokeWidth="10" strokeLinecap="round" />
      <path d="M24 58C43 49 66 50 84 61" fill="none" stroke="#1d1d1d" strokeWidth="8" strokeLinecap="round" />
      <path d="M29 77C44 70 62 71 76 80" fill="none" stroke="#1d1d1d" strokeWidth="7" strokeLinecap="round" />
    </>
  );
}

function WordIcon() {
  const rows = [22, 38, 54, 70, 86];
  return (
    <>
      <rect x="52" y="14" width="50" height="88" fill="#fff" />
      {rows.map((y) => (
        <g key={y}>
          <rect x="62" y={y} width="30" height="7" fill="#333" />
          <rect x="82" y={y} width="10" height="7" fill="#5b8cc8" />
        </g>
      ))}
      <path d="M2 16L60 0V110L2 94Z" fill="#2f5fa8" />
      <text x="30" y="70" textAnchor="middle" fontFamily="'Liberation Sans', sans-serif" fontWeight="700" fontSize="46" fill="#dfeaf8">W</text>
    </>
  );
}

function SequelIcon() {
  return (
    <>
      <ellipse cx="55" cy="80" rx="54" ry="29" fill="#f4f4f4" stroke="#bbb" />
      <ellipse cx="55" cy="80" rx="44" ry="21" fill="#f2c04e" />
      <ellipse cx="55" cy="25" rx="46" ry="25" fill="#d8dadc" />
      <rect x="22" y="26" width="66" height="56" fill="#c9a24a" />
      <ellipse cx="55" cy="84" rx="33" ry="14" fill="#d8d8d8" />
      <ellipse cx="55" cy="74" rx="33" ry="12" fill="#555" />
      <ellipse cx="55" cy="66" rx="33" ry="12" fill="#e6e6e6" />
      <ellipse cx="55" cy="56" rx="33" ry="12" fill="#555" />
      <ellipse cx="55" cy="48" rx="28" ry="11" fill="#f6f6f6" />
      <ellipse cx="55" cy="23" rx="40" ry="20" fill="#e9b13c" />
      <rect x="38" y="8" width="33" height="24" rx="3" fill="#f7d350" />
    </>
  );
}

function DocsIcon() {
  const rows = [42, 48, 54, 60, 66, 72, 78, 84, 90, 96];
  return (
    <>
      <rect x="26" y="2" width="64" height="100" fill="#f0f0f0" />
      <rect x="15" y="14" width="78" height="96" fill="#fcfcfc" stroke="#ddd" />
      <path d="M12 8V108" stroke="#111" strokeWidth="5" strokeDasharray="4 5" />
      <path d="M70 14C72 30 80 38 92 38V14Z" fill="#ddd" />
      <text x="30" y="28" fontFamily="'Liberation Sans', sans-serif" fontWeight="700" fontSize="5" fill="#555">Design Info</text>
      {rows.map((y) => (
        <path key={y} d={`M22 ${y}H84`} stroke="#b0b0b0" strokeWidth="1.5" />
      ))}
    </>
  );
}

function TrashIcon() {
  return (
    <>
      <path d="M12 22C30 14 80 14 98 22L90 98C80 110 30 110 20 98Z" fill="#e6e8e6" />
      <ellipse cx="55" cy="20" rx="44" ry="12" fill="#dfe2e0" stroke="#c8c8c8" />
      <path d="M30 22L40 6L50 24L62 4L74 24L84 12L86 24C66 34 44 34 30 22Z" fill="#9aa4a6" />
      <path d="M40 8L46 22L52 10Z M62 6L70 22L76 14Z" fill="#f4f4f4" />
    </>
  );
}

const dockApps = [
  { Icon: FinderIcon, name: "finder", running: true },
  { Icon: LaunchpadIcon, name: "launchpad" },
  { Icon: SafariIcon, name: "safari" },
  { Icon: MailIcon, name: "mail", running: true },
  { Icon: OutlookIcon, name: "outlook", running: true },
  { Icon: StickiesIcon, name: "stickies", running: true },
  { Icon: CalendarIcon, name: "calendar" },
  { Icon: PhotosIcon, name: "photos" },
  { Icon: MessagesIcon, name: "messages", running: true },
  { Icon: AppStoreIcon, name: "appstore" },
  { Icon: TrelloIcon, name: "trello", running: true },
  { Icon: TerminalIcon, name: "terminal", running: true },
  { Icon: DuckIcon, name: "duck" },
  { Icon: ChromeIcon, name: "chrome", running: true },
  { Icon: SublimeIcon, name: "sublime", running: true },
  { Icon: SpotifyIcon, name: "spotify", running: true },
  { Icon: WordIcon, name: "word", running: true },
  { Icon: SequelIcon, name: "sequel", running: true },
];

function DockItem({ app }) {
  const { Icon } = app;
  return (
    <div className="w-[124px] shrink-0 flex flex-col items-center pt-[15px]">
      <svg viewBox="0 0 110 110" className="w-[110px] h-[110px] overflow-visible">
        <Icon />
      </svg>
      {app.running && <span className="mt-[7px] block w-[7px] h-[7px] rounded-full bg-[#0a2c30]" />}
    </div>
  );
}

function Dock() {
  return (
    <div className="relative mt-[2px] ml-[404px] w-[2552px] h-[148px] flex pl-[8px] rounded-t-[12px] shadow-[0_-6px_50px_rgba(0,0,0,0.12)] bg-[linear-gradient(90deg,#46888a_0%,#4a967e_12%,#56a862_25%,#58b866_45%,#55ad72_55%,#4a9a88_62%,#3b7d9d_70%,#3a8f9a_82%,#4aa088_100%)]">
      {dockApps.map((app) => (
        <DockItem key={app.name} app={app} />
      ))}
      <span className="block ml-[26px] mr-[26px] mt-[18px] w-[2px] h-[106px] bg-[#1f6a58]" />
      <DockItem app={{ Icon: DocsIcon }} />
      <DockItem app={{ Icon: TrashIcon }} />
    </div>
  );
}

export default function App() {
  return (
    <div className="relative w-[3360px] h-[2100px] overflow-hidden font-['Open_Sans',sans-serif]">
      <Wallpaper />
      <div className="relative flex flex-col h-full">
        <MenuBar />
        <ChromeWindow />
        <Dock />
      </div>
    </div>
  );
}
